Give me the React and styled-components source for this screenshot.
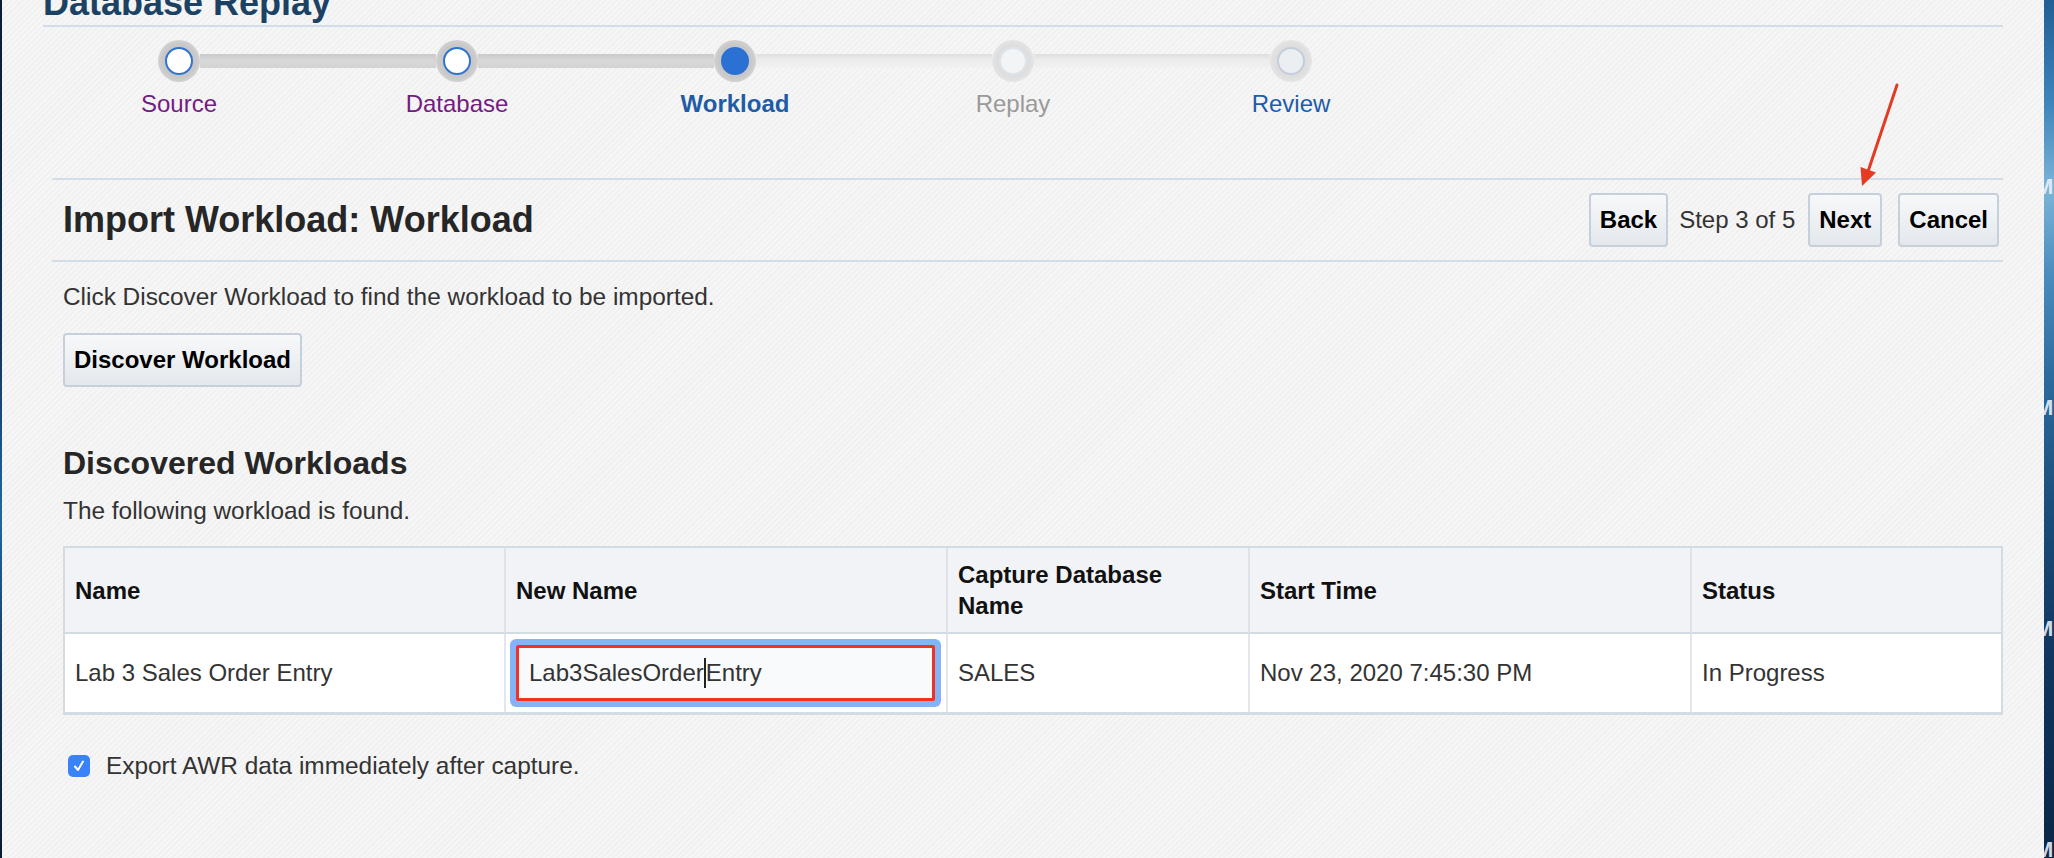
import React from 'react';
import styled, { createGlobalStyle } from 'styled-components';

const GlobalStyle = createGlobalStyle`
  html, body {
    margin: 0;
    padding: 0;
  }
  body {
    font-family: "Liberation Sans", Arial, Helvetica, sans-serif;
    background: #f4f4f4;
  }
`;

const steps = [
  { label: 'Source', state: 'done' },
  { label: 'Database', state: 'done' },
  { label: 'Workload', state: 'current' },
  { label: 'Replay', state: 'disabled' },
  { label: 'Review', state: 'todo' },
];

const columns = [
  { title: 'Name', width: 441 },
  { title: 'New Name', width: 442 },
  { title: 'Capture Database Name', width: 302 },
  { title: 'Start Time', width: 442 },
  { title: 'Status', width: 309 },
];

const App = () => {
  return (
    <Screen>
      <GlobalStyle />
      <LeftEdge />
      <Main>
        <Inner>
          <PageTitle>Database Replay</PageTitle>
          <TopRule />

          <Stepper>
            {steps.map((step, i) => (
              <StepItem key={step.label}>
                <RingRow>
                  <Track $tone={i === 0 ? null : i <= 2 ? 'dark' : 'light'} />
                  <Ring $active={step.state === 'done' || step.state === 'current'}>
                    <Dot $state={step.state} />
                  </Ring>
                  <Track $tone={i === steps.length - 1 ? null : i < 2 ? 'dark' : 'light'} />
                </RingRow>
                <StepLabel $state={step.state}>{step.label}</StepLabel>
              </StepItem>
            ))}
          </Stepper>

          <Body>
            <Rule $top={60} />
            <HeaderRow>
              <Heading>Import Workload: Workload</Heading>
              <NavGroup>
                <Button>Back</Button>
                <StepCount>Step 3 of 5</StepCount>
                <Button>Next</Button>
                <Button $gap={16}>Cancel</Button>
              </NavGroup>
            </HeaderRow>
            <Rule />

            <Content>
              <Hint>Click Discover Workload to find the workload to be imported.</Hint>
              <DiscoverButton>Discover Workload</DiscoverButton>

              <SubHeading>Discovered Workloads</SubHeading>
              <SubText>The following workload is found.</SubText>

              <Table>
                <colgroup>
                  {columns.map((c) => (
                    <col key={c.title} style={{ width: c.width }} />
                  ))}
                </colgroup>
                <thead>
                  <tr>
                    {columns.map((c) => (
                      <Th key={c.title}>{c.title === 'Capture Database Name' ? <>Capture Database<br />Name</> : c.title}</Th>
                    ))}
                  </tr>
                </thead>
                <tbody>
                  <tr>
                    <Td>Lab 3 Sales Order Entry</Td>
                    <Td>
                      <FakeInput>
                        Lab3SalesOrder<Caret />Entry
                      </FakeInput>
                    </Td>
                    <Td>SALES</Td>
                    <Td>Nov 23, 2020 7:45:30 PM</Td>
                    <Td>In Progress</Td>
                  </tr>
                </tbody>
              </Table>

              <CheckRow>
                <CheckBox>
                  <svg width="14" height="14" viewBox="0 0 14 14">
                    <path d="M3 7.5 L6 11 L11 2.5" fill="none" stroke="#fff" strokeWidth="2" strokeLinecap="round" strokeLinejoin="round" />
                  </svg>
                </CheckBox>
                <CheckLabel>Export AWR data immediately after capture.</CheckLabel>
              </CheckRow>
            </Content>
          </Body>
        </Inner>
      </Main>
      <RightEdge>
        <DesktopGlyph>M</DesktopGlyph>
        <DesktopGlyph>M</DesktopGlyph>
        <DesktopGlyph>M</DesktopGlyph>
        <DesktopGlyph>M</DesktopGlyph>
      </RightEdge>

      <Arrow width="60" height="116" viewBox="0 0 60 116">
        <line x1="47" y1="7" x2="18.5" y2="92" stroke="#e43b24" strokeWidth="3" strokeLinecap="round" />
        <polygon points="12,108 10.5,89 26,94.5" fill="#e43b24" />
      </Arrow>
    </Screen>
  );
};

const Screen = styled.div`
  position: relative;
  display: flex;
  width: 2054px;
  height: 858px;
  overflow: hidden;
`;

const LeftEdge = styled.div`
  width: 2px;
  flex-shrink: 0;
  background: linear-gradient(180deg, #0a1c36 0%, #13365e 40%, #2068a0 60%, #14375c 80%, #0a1a33 100%);
`;

const RightEdge = styled.div`
  width: 10px;
  flex-shrink: 0;
  display: flex;
  flex-direction: column;
  gap: 196px;
  padding-top: 174px;
  overflow: hidden;
  background: linear-gradient(
    180deg,
    #215f96 0%,
    #3e84bb 12%,
    #7cb4d8 22%,
    #4a8cbe 32%,
    #2a689b 45%,
    #1b4c7a 60%,
    #123760 75%,
    #0b2545 100%
  );
`;

const DesktopGlyph = styled.span`
  display: block;
  margin-left: -9px;
  font-size: 22px;
  line-height: 25px;
  font-weight: bold;
  color: rgba(235, 242, 250, 0.9);
`;

const Main = styled.div`
  flex: 1;
  background: repeating-linear-gradient(
    135deg,
    #f6f6f6 0px,
    #f6f6f6 2px,
    #f1f1f1 2px,
    #f1f1f1 4px
  );
`;

const Inner = styled.div`
  margin-left: 41px;
  width: 1960px;
`;

const PageTitle = styled.div`
  margin-top: -15px;
  font-size: 36px;
  line-height: 36px;
  font-weight: bold;
  color: #1b4263;
`;

const TopRule = styled.div`
  margin-top: 4px;
  height: 2px;
  background: #d3dde7;
`;

const Stepper = styled.div`
  display: flex;
  margin-left: -3px;
  padding-top: 13px;
`;

const StepItem = styled.div`
  width: 278px;
  display: flex;
  flex-direction: column;
  align-items: center;
`;

const RingRow = styled.div`
  width: 100%;
  display: flex;
  align-items: center;
`;

const Track = styled.div`
  flex: 1;
  height: 14px;
  background: ${({ $tone }) =>
    $tone === 'dark'
      ? 'linear-gradient(180deg, #c9c9c9 0%, #d8d8d8 45%, #d3d3d3 100%)'
      : $tone === 'light'
      ? 'linear-gradient(180deg, #dedede 0%, #ececec 40%, #f1f1f1 100%)'
      : 'transparent'};
`;

const Ring = styled.div`
  width: 42px;
  height: 42px;
  border-radius: 50%;
  flex-shrink: 0;
  display: flex;
  align-items: center;
  justify-content: center;
  background: ${({ $active }) =>
    $active
      ? 'radial-gradient(circle, #c8c8c8 55%, #dadada 85%, #e6e6e6 100%)'
      : 'radial-gradient(circle, #dedede 55%, #ebebeb 85%, #f1f1f1 100%)'};
`;

const dotStyles = {
  done: 'background: #ffffff; border: 2px solid #2f74cf;',
  current: 'background: #2b71d3; border: 2px solid #2b71d3;',
  disabled: 'background: #f2f4f6; border: 2px solid #dde3ea;',
  todo: 'background: #eceff2; border: 2px solid #c3cedb;',
};

const Dot = styled.div`
  width: 28px;
  height: 28px;
  box-sizing: border-box;
  border-radius: 50%;
  ${({ $state }) => dotStyles[$state]}
`;

const labelColors = {
  done: '#731c81',
  current: '#1f5ca5',
  disabled: '#9a9a9a',
  todo: '#1d5ca8',
};

const StepLabel = styled.div`
  margin-top: 8px;
  font-size: 24px;
  line-height: 28px;
  color: ${({ $state }) => labelColors[$state]};
  font-weight: ${({ $state }) => ($state === 'current' ? 'bold' : 'normal')};
`;

const Body = styled.div`
  margin-left: 9px;
`;

const Rule = styled.div`
  margin-top: ${({ $top }) => $top || 0}px;
  height: 2px;
  background: #d3dde7;
`;

const HeaderRow = styled.div`
  display: flex;
  align-items: center;
  justify-content: space-between;
  padding: 13px 4px 13px 11px;
`;

const Heading = styled.h1`
  margin: 0;
  font-size: 36px;
  line-height: 40px;
  font-weight: bold;
  color: #262626;
`;

const NavGroup = styled.div`
  display: flex;
  align-items: center;
`;

const Button = styled.button`
  height: 54px;
  margin-left: ${({ $gap }) => $gap || 0}px;
  padding: 0 9px;
  border: 2px solid #c6d0da;
  border-radius: 4px;
  background: linear-gradient(180deg, #f7f8fa 0%, #e4e8ec 100%);
  font-family: "Liberation Sans", Arial, sans-serif;
  font-size: 24px;
  font-weight: bold;
  color: #000;
`;

const StepCount = styled.span`
  margin: 0 13px 0 11px;
  font-size: 24px;
  color: #333;
`;

const Content = styled.div`
  padding-left: 11px;
`;

const Hint = styled.p`
  margin: 21px 0 0;
  font-size: 24.4px;
  line-height: 28px;
  color: #333;
`;

const DiscoverButton = styled(Button)`
  display: block;
  margin-top: 22px;
`;

const SubHeading = styled.h2`
  margin: 58px 0 0;
  font-size: 32px;
  line-height: 36px;
  font-weight: bold;
  color: #262626;
`;

const SubText = styled.p`
  margin: 16px 0 0;
  font-size: 24.4px;
  line-height: 28px;
  color: #333;
`;

const Table = styled.table`
  margin-top: 21px;
  width: 1936px;
  table-layout: fixed;
  border-collapse: separate;
  border-spacing: 0;
  border: 2px solid #d3dbe3;
  border-bottom-width: 3px;
  font-size: 24px;
`;

const Th = styled.th`
  height: 86px;
  box-sizing: border-box;
  padding: 0 12px 0 10px;
  text-align: left;
  vertical-align: middle;
  font-weight: bold;
  line-height: 31px;
  color: #111;
  background: #f1f3f6;
  border-right: 2px solid #dde3e9;
  border-bottom: 2px solid #d3dbe3;

  &:last-child {
    border-right: none;
  }
`;

const Td = styled.td`
  height: 78px;
  box-sizing: border-box;
  padding: 0 12px 0 10px;
  vertical-align: middle;
  color: #333;
  background: #ffffff;
  border-right: 2px solid #e3e7ec;

  &:last-child {
    border-right: none;
  }
`;

const FakeInput = styled.div`
  width: 419px;
  height: 56px;
  box-sizing: border-box;
  display: flex;
  align-items: center;
  padding-left: 10px;
  border: 3px solid #ee3324;
  border-radius: 2px;
  background: #f9fafc;
  box-shadow: 0 0 0 6px #84b4f6;
  font-size: 24px;
  color: #333;
  white-space: nowrap;
`;

const Caret = styled.span`
  display: inline-block;
  width: 2px;
  height: 30px;
  background: #222;
`;

const CheckRow = styled.div`
  display: flex;
  align-items: center;
  margin-top: 37px;
`;

const CheckBox = styled.span`
  width: 22px;
  height: 22px;
  margin-left: 5px;
  border-radius: 5px;
  background: #3a82f7;
  display: flex;
  align-items: center;
  justify-content: center;
`;

const CheckLabel = styled.span`
  margin-left: 16px;
  font-size: 24.4px;
  line-height: 28px;
  color: #333;
`;

const Arrow = styled.svg`
  position: absolute;
  left: 1850px;
  top: 78px;
`;

export default App;
